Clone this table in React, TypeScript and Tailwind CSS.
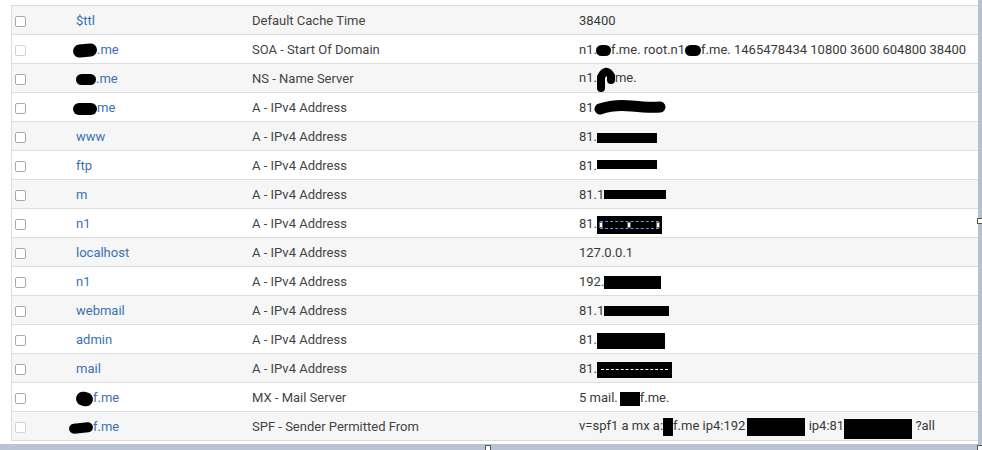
import type { ReactNode } from 'react';

interface DnsRow {
  name: ReactNode;
  type: string;
  value: ReactNode;
  faint?: boolean;
}

const Rect = ({ className }: { className: string }) => (
  <span className={`inline-block bg-black align-middle ${className}`} />
);

const Blob = ({ className }: { className: string }) => (
  <span className={`inline-block bg-black rounded-full align-middle ${className}`} />
);

const rows: DnsRow[] = [
  { name: '$ttl', type: 'Default Cache Time', value: '38400' },
  {
    name: (
      <>
        <Blob className="w-[24px] h-[13px] -ml-[3px] -rotate-6" />
        .me
      </>
    ),
    type: 'SOA - Start Of Domain',
    faint: true,
    value: (
      <>
        n1.
        <Blob className="w-[15px] h-[11px] -ml-[1px]" />
        f.me. root.n1
        <Blob className="w-[16px] h-[11px]" />
        f.me. 1465478434 10800 3600 604800 38400
      </>
    ),
  },
  {
    name: (
      <>
        <Blob className="w-[20px] h-[11px]" />
        .me
      </>
    ),
    type: 'NS - Name Server',
    value: (
      <>
        n1.
        <svg width="18" height="26" viewBox="0 0 18 26" className="inline-block align-middle">
          <path d="M4 22 L4 11 Q9 1 14 10 L14 14" stroke="black" strokeWidth="8" fill="none" strokeLinecap="round" />
        </svg>
        me.
      </>
    ),
  },
  {
    name: (
      <>
        <Blob className="w-[24px] h-[12px] -ml-[3px]" />
        me
      </>
    ),
    type: 'A - IPv4 Address',
    value: (
      <>
        81
        <svg width="72" height="18" viewBox="0 0 72 18" className="inline-block align-middle -mt-[3px]">
          <path d="M6 11 Q20 6 38 8 T66 9" stroke="black" strokeWidth="11" fill="none" strokeLinecap="round" />
        </svg>
      </>
    ),
  },
  { name: 'www', type: 'A - IPv4 Address', value: <>81.<Rect className="w-[60px] h-[10px]" /></> },
  { name: 'ftp', type: 'A - IPv4 Address', value: <>81.<Rect className="w-[60px] h-[9px] -mt-[4px]" /></> },
  { name: 'm', type: 'A - IPv4 Address', value: <>81.1<Rect className="w-[62px] h-[9px] -mt-[2px]" /></> },
  {
    name: 'n1',
    type: 'A - IPv4 Address',
    value: (
      <>
        81.
        <span className="inline-flex items-center align-middle bg-black w-[65px] h-[18px] px-[3px]">
          <span className="relative flex-1 h-[8px] border-y border-dashed border-[#5b9ae8]">
            <span className="absolute -left-[1px] top-[0px] w-[4px] h-[6px] bg-white border border-[#666]" />
            <span className="absolute left-[27px] top-[0px] w-[4px] h-[6px] bg-white border border-[#666]" />
            <span className="absolute -right-[1px] top-[0px] w-[4px] h-[6px] bg-white border border-[#666]" />
          </span>
        </span>
      </>
    ),
  },
  { name: 'localhost', type: 'A - IPv4 Address', value: '127.0.0.1' },
  { name: 'n1', type: 'A - IPv4 Address', value: <>192.<Rect className="w-[57px] h-[13px]" /></> },
  { name: 'webmail', type: 'A - IPv4 Address', value: <>81.1<Rect className="w-[65px] h-[10px] -mt-[2px]" /></> },
  { name: 'admin', type: 'A - IPv4 Address', value: <>81.<Rect className="w-[68px] h-[16px]" /></> },
  {
    name: 'mail',
    type: 'A - IPv4 Address',
    value: (
      <>
        81.
        <span className="inline-flex items-center align-middle bg-black w-[75px] h-[16px] px-[4px]">
          <span className="flex-1 border-t border-dashed border-white" />
        </span>
      </>
    ),
  },
  {
    name: (
      <>
        <Blob className="w-[17px] h-[14px] rotate-12" />
        f.me
      </>
    ),
    type: 'MX - Mail Server',
    value: <>5 mail.<Rect className="w-[20px] h-[14px] ml-[2px]" />f.me.</>,
  },
  {
    name: (
      <>
        <Blob className="w-[24px] h-[10px] -ml-[7px] -rotate-6" />
        f.me
      </>
    ),
    type: 'SPF - Sender Permitted From',
    faint: true,
    value: (
      <>
        v=spf1 a mx a:<Rect className="w-[10px] h-[18px]" />f.me ip4:192
        <Rect className="w-[58px] h-[18px] ml-[2px]" /> ip4:81
        <Rect className="w-[68px] h-[20px] mt-[4px]" /> ?all
      </>
    ),
  },
];

export default function App() {
  return (
    <div className="relative w-[982px] h-[450px] bg-white overflow-hidden flex flex-col" style={{ fontFamily: 'Roboto, "Liberation Sans", sans-serif' }}>
      <div className="flex flex-1">
        <div className="flex-1 pl-[11px] pt-[5px]">
          <div className="border-t border-l border-[#dddddd]">
            {rows.map((r, i) => (
              <div
                key={i}
                className={`grid grid-cols-[64px_176px_327px_1fr] items-center h-[29px] pt-[2px] border-b border-[#dddddd] text-[13px] whitespace-nowrap ${i % 2 === 0 ? 'bg-[#f6f6f6]' : 'bg-white'}`}
              >
                <div className="pl-[3px] flex items-center">
                  <span className={`w-[11px] h-[11px] rounded-[2px] border bg-white ${r.faint ? 'border-[#cfd4dc]' : 'border-[#a9a9a9]'}`} />
                </div>
                <div className="text-[#3a72b4]">{r.name}</div>
                <div className="text-[#444444]">{r.type}</div>
                <div className="text-[#3a3a3a]">{r.value}</div>
              </div>
            ))}
          </div>
        </div>
        <div className="w-[4px] bg-[#b5c0d1]" />
      </div>
      <div className="h-[6px] bg-[#b9c3d3]" />

      {/* picture resize handles */}
      <span className="absolute left-[977px] top-[218px] w-[6px] h-[6px] bg-white border border-[#555]" />
      <span className="absolute left-[485px] top-[445px] w-[6px] h-[6px] bg-white border border-[#555]" />
      <span className="absolute left-[977px] top-[445px] w-[6px] h-[6px] bg-white border border-[#555]" />
    </div>
  );
}
